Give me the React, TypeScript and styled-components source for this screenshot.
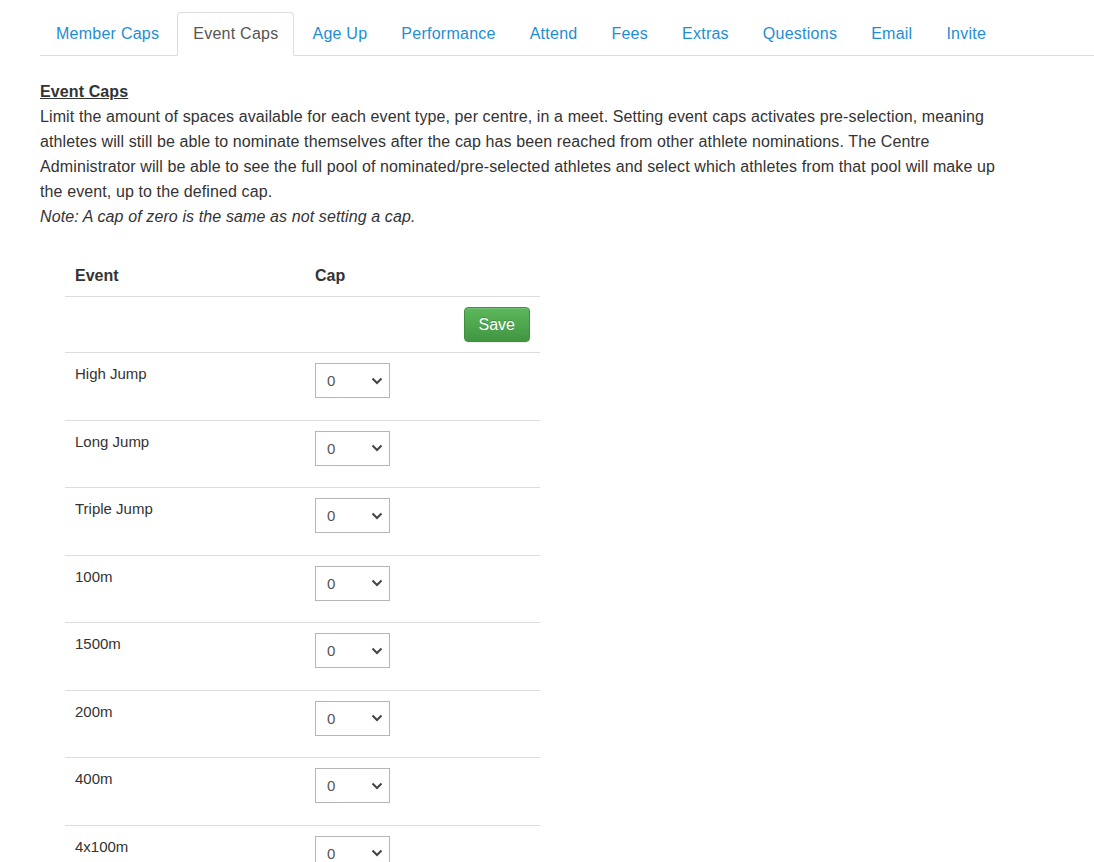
import React from "react";
import styled, { createGlobalStyle } from "styled-components";

const Global = createGlobalStyle`
  html, body { margin: 0; padding: 0; background: #fff; }
  body {
    font-family: "Liberation Sans", Arial, Helvetica, sans-serif;
    color: #333;
    font-size: 16px;
  }
  * { box-sizing: border-box; }
`;

const Page = styled.div`
  padding: 12px 0 0 40px;
`;

const Tabs = styled.ul`
  display: flex;
  list-style: none;
  margin: 0;
  padding: 0;
  border-bottom: 1px solid #ddd;
`;

const Tab = styled.li<{ $active?: boolean }>`
  margin-right: 2px;
  margin-bottom: -1px;
  a {
    display: block;
    padding: 10px 15px;
    line-height: 22px;
    font-size: 16px;
    letter-spacing: 0.25px;
    text-decoration: none;
    border: 1px solid ${(p) => (p.$active ? "#ddd" : "transparent")};
    border-bottom-color: transparent;
    border-radius: 4px 4px 0 0;
    background: ${(p) => (p.$active ? "#fff" : "transparent")};
    color: ${(p) => (p.$active ? "#555" : "#1f8dd6")};
  }
`;

const Content = styled.div`
  max-width: 970px;
  padding-top: 23px;
  line-height: 25px;
  font-size: 16px;
  letter-spacing: 0.11px;
`;

const Heading = styled.div`
  font-weight: bold;
  text-decoration: underline;
`;

const Note = styled.div`
  font-style: italic;
`;

const Table = styled.div`
  margin: 28px 0 0 25px;
  width: 475px;
  display: grid;
  grid-template-columns: 240px 235px;
`;

const HeadCell = styled.div`
  padding: 8px 10px 9px 10px;
  font-weight: bold;
  font-size: 16px;
  line-height: 22px;
  border-bottom: 1px solid #ddd;
`;

const SaveRow = styled.div`
  grid-column: 1 / span 2;
  display: flex;
  justify-content: flex-end;
  padding: 10px 10px 10px;
  border-bottom: 1px solid #ddd;
`;

const SaveButton = styled.button`
  font-family: inherit;
  font-size: 16px;
  line-height: 21px;
  padding: 6px 14px;
  color: #fff;
  border: 1px solid #3e8f3e;
  border-radius: 4px;
  background: linear-gradient(to bottom, #5cb85c 0%, #419641 100%);
  box-shadow: inset 0 1px 0 rgba(255, 255, 255, 0.15), 0 1px 1px rgba(0, 0, 0, 0.075);
  text-shadow: 0 -1px 0 rgba(0, 0, 0, 0.2);
`;

const Cell = styled.div`
  padding: 10px 10px 0;
  height: 67.5px;
  font-size: 15px;
  line-height: 21px;
  border-bottom: 1px solid #ddd;
`;

const SelectBox = styled.div`
  width: 75px;
  height: 35px;
  border: 1px solid #b5b5b5;
  display: flex;
  align-items: center;
  justify-content: space-between;
  padding: 0 6px 0 11px;
  color: #555;
  font-size: 15px;
  background: #fff;
`;

const tabs = [
  "Member Caps",
  "Event Caps",
  "Age Up",
  "Performance",
  "Attend",
  "Fees",
  "Extras",
  "Questions",
  "Email",
  "Invite",
];

const events = [
  "High Jump",
  "Long Jump",
  "Triple Jump",
  "100m",
  "1500m",
  "200m",
  "400m",
  "4x100m",
];

const Chevron = () => (
  <svg width="12" height="8" viewBox="0 0 12 8">
    <path d="M1.5 1.5 L6 6 L10.5 1.5" fill="none" stroke="#444" strokeWidth="2" />
  </svg>
);

export default function App() {
  return (
    <Page>
      <Global />
      <Tabs>
        {tabs.map((t) => (
          <Tab key={t} $active={t === "Event Caps"}>
            <a href="#">{t}</a>
          </Tab>
        ))}
      </Tabs>
      <Content>
        <Heading>Event Caps</Heading>
        <div>
          Limit the amount of spaces available for each event type, per centre, in a meet. Setting
          event caps activates pre-selection, meaning athletes will still be able to nominate
          themselves after the cap has been reached from other athlete nominations. The Centre
          Administrator will be able to see the full pool of nominated/pre-selected athletes and
          select which athletes from that pool will make up the event, up to the defined cap.
        </div>
        <Note>Note: A cap of zero is the same as not setting a cap.</Note>
      </Content>
      <Table>
        <HeadCell>Event</HeadCell>
        <HeadCell>Cap</HeadCell>
        <SaveRow>
          <SaveButton>Save</SaveButton>
        </SaveRow>
        {events.map((e) => (
          <React.Fragment key={e}>
            <Cell>{e}</Cell>
            <Cell>
              <SelectBox>
                <span>0</span>
                <Chevron />
              </SelectBox>
            </Cell>
          </React.Fragment>
        ))}
      </Table>
    </Page>
  );
}
